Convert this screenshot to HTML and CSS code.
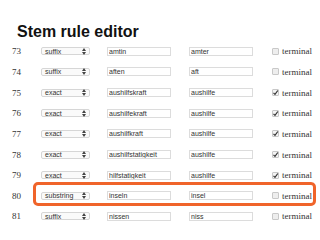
FILE: index.html
```html
<!DOCTYPE html>
<html lang="en">
<head>
    <meta charset="UTF-8">
    <meta name="viewport" content="width=device-width, initial-scale=1.0">
    <title>Stem rule editor</title>
    <link rel="stylesheet" href="styles.css">
</head>
<body>
    <h1 class="title">Stem rule editor</h1>

    <div class="rules">
        <div class="rule">
            <span class="num">73</span>
            <div class="select"><span>suffix</span><svg viewBox="0 0 4 7" width="4" height="7"><path d="M0 3 L2 0 L4 3 Z M0 4 L2 7 L4 4 Z" fill="#444"/></svg></div>
            <input class="field" type="text" value="amtin">
            <input class="field" type="text" value="amter">
            <span class="box"></span>
            <span class="label">terminal</span>
        </div>
        <div class="rule">
            <span class="num">74</span>
            <div class="select"><span>suffix</span><svg viewBox="0 0 4 7" width="4" height="7"><path d="M0 3 L2 0 L4 3 Z M0 4 L2 7 L4 4 Z" fill="#444"/></svg></div>
            <input class="field" type="text" value="aften">
            <input class="field" type="text" value="aft">
            <span class="box"></span>
            <span class="label">terminal</span>
        </div>
        <div class="rule">
            <span class="num">75</span>
            <div class="select"><span>exact</span><svg viewBox="0 0 4 7" width="4" height="7"><path d="M0 3 L2 0 L4 3 Z M0 4 L2 7 L4 4 Z" fill="#444"/></svg></div>
            <input class="field" type="text" value="aushilfskraft">
            <input class="field" type="text" value="aushilfe">
            <span class="box checked"><svg viewBox="0 0 7 7" width="7" height="7"><path d="M1.5 3.8 L3 5.3 L5.8 1.5" fill="none" stroke="#333" stroke-width="1.2"/></svg></span>
            <span class="label">terminal</span>
        </div>
        <div class="rule">
            <span class="num">76</span>
            <div class="select"><span>exact</span><svg viewBox="0 0 4 7" width="4" height="7"><path d="M0 3 L2 0 L4 3 Z M0 4 L2 7 L4 4 Z" fill="#444"/></svg></div>
            <input class="field" type="text" value="aushilfekraft">
            <input class="field" type="text" value="aushilfe">
            <span class="box checked"><svg viewBox="0 0 7 7" width="7" height="7"><path d="M1.5 3.8 L3 5.3 L5.8 1.5" fill="none" stroke="#333" stroke-width="1.2"/></svg></span>
            <span class="label">terminal</span>
        </div>
        <div class="rule">
            <span class="num">77</span>
            <div class="select"><span>exact</span><svg viewBox="0 0 4 7" width="4" height="7"><path d="M0 3 L2 0 L4 3 Z M0 4 L2 7 L4 4 Z" fill="#444"/></svg></div>
            <input class="field" type="text" value="aushilfkraft">
            <input class="field" type="text" value="aushilfe">
            <span class="box checked"><svg viewBox="0 0 7 7" width="7" height="7"><path d="M1.5 3.8 L3 5.3 L5.8 1.5" fill="none" stroke="#333" stroke-width="1.2"/></svg></span>
            <span class="label">terminal</span>
        </div>
        <div class="rule">
            <span class="num">78</span>
            <div class="select"><span>exact</span><svg viewBox="0 0 4 7" width="4" height="7"><path d="M0 3 L2 0 L4 3 Z M0 4 L2 7 L4 4 Z" fill="#444"/></svg></div>
            <input class="field" type="text" value="aushilfstatigkeit">
            <input class="field" type="text" value="aushilfe">
            <span class="box checked"><svg viewBox="0 0 7 7" width="7" height="7"><path d="M1.5 3.8 L3 5.3 L5.8 1.5" fill="none" stroke="#333" stroke-width="1.2"/></svg></span>
            <span class="label">terminal</span>
        </div>
        <div class="rule">
            <span class="num">79</span>
            <div class="select"><span>exact</span><svg viewBox="0 0 4 7" width="4" height="7"><path d="M0 3 L2 0 L4 3 Z M0 4 L2 7 L4 4 Z" fill="#444"/></svg></div>
            <input class="field" type="text" value="hilfstatigkeit">
            <input class="field" type="text" value="aushilfe">
            <span class="box checked"><svg viewBox="0 0 7 7" width="7" height="7"><path d="M1.5 3.8 L3 5.3 L5.8 1.5" fill="none" stroke="#333" stroke-width="1.2"/></svg></span>
            <span class="label">terminal</span>
        </div>
        <div class="rule highlight">
            <span class="num">80</span>
            <div class="select"><span>substring</span><svg viewBox="0 0 4 7" width="4" height="7"><path d="M0 3 L2 0 L4 3 Z M0 4 L2 7 L4 4 Z" fill="#444"/></svg></div>
            <input class="field" type="text" value="inseln">
            <input class="field" type="text" value="insel">
            <span class="box"></span>
            <span class="label">terminal</span>
        </div>
        <div class="rule">
            <span class="num">81</span>
            <div class="select"><span>suffix</span><svg viewBox="0 0 4 7" width="4" height="7"><path d="M0 3 L2 0 L4 3 Z M0 4 L2 7 L4 4 Z" fill="#444"/></svg></div>
            <input class="field" type="text" value="nissen">
            <input class="field" type="text" value="niss">
            <span class="box"></span>
            <span class="label">terminal</span>
        </div>
    </div>
</body>
</html>
```

FILE: styles.css
```css
body {
    margin: 0;
    background: #fff;
    font-family: "Liberation Sans", Arial, sans-serif;
}
.title {
    margin: 22px 0 0 17px;
    font-size: 16px;
    line-height: 19px;
    font-weight: bold;
    color: #111;
}
.rules {
    padding-left: 12px;
}
.rule {
    position: relative;
    display: grid;
    grid-template-columns: 29px 66px 82px 83px 10px auto;
    align-items: center;
    height: 20.65px;
}
.num {
    font-family: "Liberation Serif", "Times New Roman", serif;
    font-size: 9px;
    color: #333;
}
.select {
    display: flex;
    align-items: center;
    justify-content: space-between;
    box-sizing: border-box;
    width: 49px;
    height: 8px;
    padding: 0 3px 0 3px;
    border: 1px solid #d6d6d6;
    border-radius: 2px;
    background: #fafafa;
    font-size: 7px;
    color: #333;
}
.field {
    box-sizing: border-box;
    width: 64px;
    height: 9px;
    margin: 0;
    padding: 0 1px;
    border: 1px solid #dcdcdc;
    background: #fff;
    font-family: "Liberation Sans", Arial, sans-serif;
    font-size: 7px;
    color: #333;
    outline: none;
}
.box {
    display: block;
    box-sizing: border-box;
    width: 7px;
    height: 7px;
    border: 1px solid #c8c8c8;
    border-radius: 1px;
    background: #eee;
}
.box.checked {
    background: #f4f4f4;
}
.box svg {
    display: block;
    margin: -1px;
}
.label {
    font-family: "Liberation Serif", "Times New Roman", serif;
    font-size: 9px;
    color: #333;
}
.highlight::after {
    content: "";
    position: absolute;
    left: 21px;
    right: 4px;
    top: -3px;
    bottom: 0;
    border: 3px solid #f0642a;
    border-radius: 5px;
}
```
